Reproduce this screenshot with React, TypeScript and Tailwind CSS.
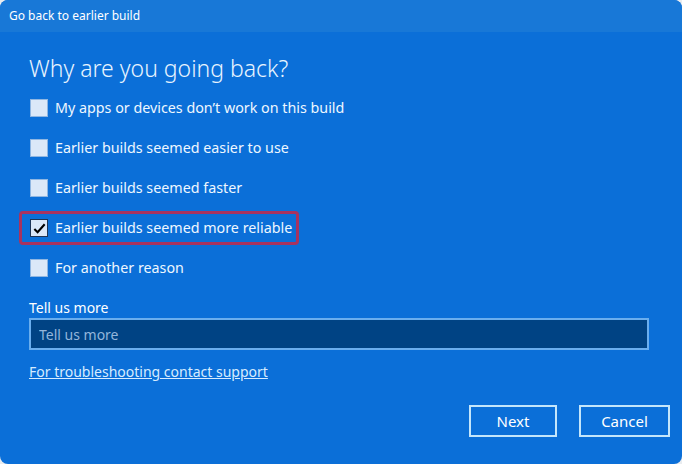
import { useState } from 'react';

const reasons = [
  'My apps or devices don’t work on this build',
  'Earlier builds seemed easier to use',
  'Earlier builds seemed faster',
  'Earlier builds seemed more reliable',
  'For another reason',
];

function Checkbox({ checked }: { checked: boolean }) {
  return (
    <span
      className={`w-[18px] h-[18px] flex items-center justify-center bg-[#dbe8f8] border ${
        checked ? 'border-[#1d3557]' : 'border-[#8fb6e2]'
      }`}
    >
      {checked && (
        <svg viewBox="0 0 16 16" className="w-[15px] h-[15px]">
          <path d="M2.5 8.5 L6 12 L13.5 3.5" fill="none" stroke="#000" strokeWidth="2.2" />
        </svg>
      )}
    </span>
  );
}

export default function App() {
  const [checked, setChecked] = useState<number[]>([3]);
  const [more, setMore] = useState('');

  const toggle = (i: number) =>
    setChecked((c) => (c.includes(i) ? c.filter((x) => x !== i) : [...c, i]));

  return (
    <div className="w-[682px] h-[464px] bg-[#e9ecef]" style={{ fontFamily: '"Noto Sans", "Open Sans", sans-serif' }}>
      <div className="w-full h-full rounded-[8px] overflow-hidden bg-[#0b6fd8] flex flex-col">
        {/* Title bar */}
        <div className="h-[32px] bg-[#1878d7] flex items-center pl-[9px] text-[12px] text-white">
          Go back to earlier build
        </div>

        <div className="pl-[29px] pt-[20px] flex flex-col text-white">
          <h1 className="text-[23px] leading-[32px] font-light text-[#e8f4ff]">Why are you going back?</h1>

          <div className="mt-[4px] flex flex-col">
            {reasons.map((r, i) => {
              const on = checked.includes(i);
              const highlight = i === 3;
              return (
                <div key={r} className="h-[40px] flex items-center">
                  <button
                    onClick={() => toggle(i)}
                    className={`flex items-center gap-[7px] text-[14.3px] text-[#eef7ff] ${
                      highlight
                        ? '-ml-[10px] pl-[8px] pr-[4px] h-[34px] border-[3px] border-[#a8335f] rounded-[4px]'
                        : 'ml-[1px]'
                    }`}
                  >
                    <Checkbox checked={on} />
                    <span>{r}</span>
                  </button>
                </div>
              );
            })}
          </div>

          <label className="mt-[10px] text-[14px] leading-[20px] text-white">Tell us more</label>
          <input
            value={more}
            onChange={(e) => setMore(e.target.value)}
            placeholder="Tell us more"
            className="w-[620px] h-[32px] bg-[#004384] border-2 border-[#6aaeee] px-[8px] text-[14px] text-white placeholder:text-[#93b6db] outline-none"
          />

          <a href="#" className="mt-[12px] text-[14px] leading-[20px] text-[#d6ecff] underline self-start">
            For troubleshooting contact support
          </a>

          <div className="mt-[23px] flex justify-end gap-[22px] pr-[12px]">
            <button className="w-[88px] h-[32px] border-2 border-[#c4e6fb] text-[15px] text-white">Next</button>
            <button className="w-[91px] h-[32px] border-2 border-[#c4e6fb] text-[15px] text-white">Cancel</button>
          </div>
        </div>
      </div>
    </div>
  );
}
